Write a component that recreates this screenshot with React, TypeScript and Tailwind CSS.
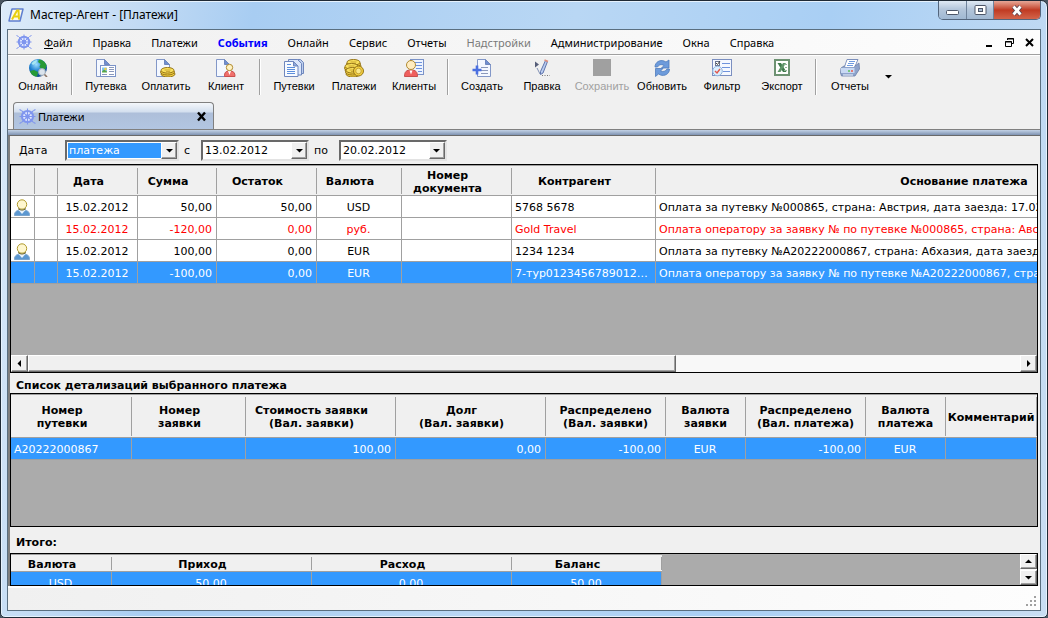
import type { ReactNode } from "react";

type Row = { client: boolean; tone: "black" | "red" | "selected"; cells: string[] };

const MENU = [
  "Правка",
  "Платежи",
  "События",
  "Онлайн",
  "Сервис",
  "Отчеты",
  "Надстройки",
  "Администрирование",
  "Окна",
  "Справка",
];

const PAYMENTS: Row[] = [
  {
    client: true,
    tone: "black",
    cells: ["15.02.2012", "50,00", "50,00", "USD", "", "5768 5678", "Оплата за путевку №000865, страна: Австрия, дата заезда: 17.02.2012"],
  },
  {
    client: false,
    tone: "red",
    cells: ["15.02.2012", "-120,00", "0,00", "руб.", "", "Gold Travel", "Оплата оператору за заявку № по путевке №000865, страна: Австрия"],
  },
  {
    client: true,
    tone: "black",
    cells: ["15.02.2012", "100,00", "0,00", "EUR", "", "1234 1234", "Оплата за путевку №A20222000867, страна: Абхазия, дата заезда: 17.02.2012"],
  },
  {
    client: false,
    tone: "selected",
    cells: ["15.02.2012", "-100,00", "0,00", "EUR", "", "7-тур0123456789012345", "Оплата оператору за заявку № по путевке №A20222000867, страна: Абхазия"],
  },
];

const TONES = {
  black: "bg-white text-black",
  red: "bg-white text-[#ff0000]",
  selected: "bg-[#3399ff] text-white",
};

const PAYMENT_ALIGN = ["text-center", "text-right", "text-right", "text-center", "text-left", "text-left", "text-left"];

/* ---------- icons ---------- */

function Wheel({ className }: { className: string }) {
  return (
    <svg viewBox="0 0 16 16" className={className} fill="none" stroke="#7f95ee">
      <circle cx="8" cy="8" r="5.2" strokeWidth="2" fill="#dfe6ff" />
      <circle cx="8" cy="8" r="1.6" strokeWidth="1.2" />
      <path d="M8 0.5v15M0.5 8h15M2.7 2.7l10.6 10.6M13.3 2.7L2.7 13.3M.5 1.5l2 1M15.500 1.500l-2 1M.5 14.500l2-1M15.500 14.500l-2-1" />
    </svg>
  );
}

function Sheet({ x = 0 }: { x?: number }) {
  return (
    <g transform={`translate(${x} 0)`}>
      <path d="M.5.5h8l5 5v12H.5z" fill="#f4f8ff" stroke="#8297c8" />
      <path d="M8.500.5l5 5h-5z" fill="#6f8fd0" stroke="#6f87bd" />
    </g>
  );
}

function Coins({ x, y }: { x: number; y: number }) {
  return (
    <g transform={`translate(${x} ${y})`} fill="#f3cf3f" stroke="#96761a">
      <ellipse cx="8" cy="7" rx="7" ry="3" />
      <ellipse cx="7.500" cy="5" rx="7" ry="3" />
      <ellipse cx="7.500" cy="3.300" rx="6.500" ry="2.800" fill="#f9e05c" />
      <path d="M4.500 3h6M6 4.500h4" stroke="#c09a2a" strokeWidth=".8" />
    </g>
  );
}

const ICONS: Record<string, ReactNode> = {
  globe: (
    <>
      <defs>
        <radialGradient id="globe" cx=".4" cy=".3" r=".75">
          <stop offset="0" stopColor="#9fe0ff" />
          <stop offset=".5" stopColor="#1e7fd0" />
          <stop offset="1" stopColor="#0a3c80" />
        </radialGradient>
      </defs>
      <circle cx="10" cy="9" r="9" fill="url(#globe)" />
      <path d="M11 .5c3 0 6 2 7.500 5.500l-1 4-3 1-3-3 1-3-2.500-2zM2 12l4-1 4 2-1 4.500C5 17.500 3 15 2 12z" fill="#279a35" />
      <path d="M3.500 4.500C5 2 7.500 1 9.500 1L8 4 5 6z" fill="#a6e6f2" />
      <circle cx="14" cy="13" r="3.400" fill="#dbe4ec" stroke="#a3afba" />
      <path d="M16.500 15.500l2.500 2.500" stroke="#8b7565" strokeWidth="1.600" />
    </>
  ),
  voucher: (
    <>
      <Sheet />
      <rect x="4.500" y="6.500" width="15" height="11" fill="#fff" stroke="#7b93c8" />
      <path d="M6 8.500h5v4H6z" fill="#7fc4f2" />
      <path d="M6 12.500l2-2 3 2v1H6z" fill="#58a548" />
      <circle cx="9.500" cy="10" r="1.200" fill="#f3cf3a" />
      <path d="M13 8.500h5M13 10.500h5M13 12.500h5M6 15.500h5M13 15.500h5" stroke="#8a98bb" />
    </>
  ),
  pay: (
    <>
      <Sheet />
      <Coins x={4} y={8} />
    </>
  ),
  client: (
    <>
      <Sheet />
      <path d="M8.500 17.500c0-4 1-5.500 5-5.500s5.500 1.500 5.500 5.500z" fill="#f0706c" stroke="#c9504e" />
      <path d="M12 12l1.500 4L15 12z" fill="#fff" />
      <circle cx="13.500" cy="8.500" r="3.200" fill="#fff3c4" stroke="#b08a30" />
    </>
  ),
  vouchers: (
    <>
      <path d="M7.500.5h9l3 3v11h-12z" fill="#bccdec" stroke="#6f87bd" />
      <path d="M4.500.5h9l4 4v11.500h-13z" fill="#dbe6fa" stroke="#6f87bd" />
      <path d="M.5 2.500h9l4.500 4.500v10.500H.5z" fill="#f8fbff" stroke="#6f87bd" />
      <path d="M9.500 2.500l4.500 4.500H9.500z" fill="#8ea9dc" stroke="#6f87bd" />
      <path d="M3 5.500h4M3 8.500h8M3 10.500h8M3 12.500h8M3 14.500h8" stroke="#5d8fdc" />
    </>
  ),
  payments: (
    <>
      <Coins x={2} y={0} />
      <Coins x={0} y={4} />
      <Coins x={1} y={8} />
      <circle cx="14.500" cy="12" r="5" fill="#f3cf3f" stroke="#96761a" />
      <circle cx="14.500" cy="12" r="2.800" fill="#fbe98a" stroke="#b8952c" strokeWidth=".8" />
    </>
  ),
  clients: (
    <>
      <rect x="6.500" y=".5" width="13" height="15" fill="#eef4ff" stroke="#7b93c8" />
      <path d="M11 3.500h7M12 6.500h6M12 9.500h6M14 12.500h4" stroke="#6f93dc" />
      <path d="M.5 17.500c0-5 2-6.500 6.500-6.500s6.500 1.500 6.500 6.500z" fill="#ef5f5e" stroke="#c9504e" />
      <path d="M5.500 11.500l1.500 4 1.500-4z" fill="#fff" />
      <circle cx="7" cy="6" r="4.500" fill="#ffecc0" stroke="#b08a30" />
    </>
  ),
  create: (
    <>
      <Sheet x={5} />
      <path d="M9 8.500h7M9 11.500h7M9 14.500h7" stroke="#8a98bb" />
      <path d="M5 6.500v9M.5 11h9" stroke="#4a6fe0" strokeWidth="2.600" />
    </>
  ),
  edit: (
    <>
      <path d="M3 2.500l4 3-4 3z" fill="#555d78" />
      <path d="M13.500 1.500l-5 11 0 3 2.500-1.500 4.500-11.500z" fill="#b9cbee" stroke="#5e74ad" />
      <path d="M12.500 1l3.500 1.500" stroke="#e08f7e" strokeWidth="1.500" />
      <path d="M5 9l3 6" stroke="#8190b5" />
      <path d="M10 16.500h8" stroke="#777" strokeDasharray="1 1.500" />
    </>
  ),
  save: <rect x="1" y="0" width="18" height="17" fill="#a0a0a0" />,
  refresh: (
    <>
      <path d="M3 8C3 3 8 .5 12 2l2 1 3-2v8H9.500L12 6.500C9.500 5 7 5.500 5.500 8z" fill="#6d9bdb" stroke="#4f7cbd" strokeWidth=".8" />
      <path d="M17.500 10c0 5-5 7.500-9 6l-2-1-3 2.500V9.500H11L8.500 12c2.500 1 5 .5 6.500-2z" fill="#6d9bdb" stroke="#4f7cbd" strokeWidth=".8" />
    </>
  ),
  filter: (
    <>
      <rect x=".5" y=".5" width="19" height="16" fill="#f5f8ff" stroke="#7b8fc0" />
      <rect x="3.500" y="2.500" width="4" height="4" fill="#fff" stroke="#6b7690" />
      <path d="M4 4l1.500 1.500L8 2" fill="none" stroke="#444" />
      <path d="M10 4.500h8M10 8.500h8M11 12.500h7" stroke="#6f93dc" />
      <circle cx="5.500" cy="12" r="4.800" fill="#dcefff" stroke="#8fb2dc" />
      <path d="M3 12l2 2 3-4" fill="none" stroke="#e2574c" strokeWidth="1.400" />
    </>
  ),
  excel: (
    <>
      <rect x="3" y="1" width="14" height="15" fill="#fff" stroke="#6d9272" strokeWidth="2" />
      <path d="M5.500 4H9l5.500 9H11z" fill="#3f7a4c" />
      <path d="M14 4h-3l-5.500 9h3z" fill="#5f9469" />
      <path d="M12 5.500h3M13 8.500h2M12 11.500h3" stroke="#8fb296" />
    </>
  ),
  printer: (
    <>
      <path d="M7 .5h11l-4 9H4z" fill="#fff" stroke="#7d90bb" />
      <path d="M9 2.500h6M8 4.500h6M7 6.500h6" stroke="#6f9be0" />
      <path d="M1 9l3-2h11l4-3 .5 6-4.500 7H1.500L.5 14z" fill="#8ea3cb" stroke="#6c80aa" strokeWidth=".8" />
      <path d="M1 9h13.500v5H1z" fill="#c8d9f3" />
      <path d="M7 3h9l-2 5H5z" fill="#fff" />
      <path d="M8 4.500h6M7 6.500h6" stroke="#6f9be0" />
      <path d="M8 12h2" stroke="#5cc057" strokeWidth="1.500" />
      <path d="M11 12h2" stroke="#ee5a4a" strokeWidth="1.500" />
      <path d="M3 16h10" stroke="#eef4ff" />
    </>
  ),
};

function Person() {
  return (
    <svg viewBox="0 0 16 17" className="mx-auto block h-[17px] w-[16px]">
      <path d="M.5 16.500c0-4 2-5.500 7.500-5.500s7.500 1.500 7.500 5.500z" fill="#5b97d0" stroke="#7aa5cf" />
      <path d="M4.500 11l3.500 4 3.500-4z" fill="#e9f3fc" />
      <path d="M4 9.500c2 2 6 2 8 0" fill="none" stroke="#5a5320" />
      <circle cx="8" cy="5.500" r="4.700" fill="#fff7cf" stroke="#b09a2c" />
    </svg>
  );
}

function Arrow({ dir }: { dir: "up" | "down" | "left" | "right" }) {
  const paths = {
    up: "M1 6h7L4.500 2.500z",
    down: "M1 3h7L4.500 6.500z",
    left: "M6 1v7L2.500 4.500z",
    right: "M3 1v7l3.500-3.500z",
  };
  return (
    <svg viewBox="0 0 9 9" className="size-[9px]">
      <path d={paths[dir]} fill="#000" />
    </svg>
  );
}

/* ---------- controls ---------- */

const RAISED =
  "flex items-center justify-center border border-t-white border-l-white border-r-[#696969] border-b-[#696969] bg-[#f0f0f0] shadow-[inset_-1px_-1px_#a0a0a0]";

const SUNKEN =
  "flex border-2 border-t-[#696969] border-l-[#696969] border-r-[#e3e3e3] border-b-[#e3e3e3] bg-white";

function ToolButton({ icon, label, disabled }: { icon: string; label: string; disabled?: boolean }) {
  return (
    <button
      type="button"
      disabled={disabled}
      className="flex w-[60px] flex-col items-center font-['Liberation_Sans',sans-serif] text-[11px] leading-[14px] text-black disabled:text-[#a0a0a0]"
    >
      <svg viewBox="0 0 20 18" className="mb-[2px] h-[18px] w-[20px]">
        {ICONS[icon]}
      </svg>
      {label}
    </button>
  );
}

function Separator() {
  return <div className="mx-[3px] h-[36px] w-[2px] border-l border-[#a0a0a0] bg-white" />;
}

function DateBox({ id, label, value }: { id: string; label: string; value: string }) {
  return (
    <>
      <label htmlFor={id} className="mr-[11px] ml-[5px]">
        {label}
      </label>
      <div className={SUNKEN}>
        <input id={id} type="text" defaultValue={value} className="h-[17px] w-[88px] pl-[2px] outline-none" />
        <button type="button" aria-label="Открыть календарь" className={`${RAISED} w-[16px]`}>
          <Arrow dir="down" />
        </button>
      </div>
    </>
  );
}

/* sortable headers keep room for the sort mark to the right of the text */
function HeadCell({
  children,
  size,
  sortable = true,
}: {
  children?: ReactNode;
  size: "payments" | "details" | "totals";
  sortable?: boolean;
}) {
  const heights = {
    payments: "h-[26px]",
    details: "h-[39px]",
    totals: "h-[13px]",
  };
  return (
    <th className="border-b border-[#a0a0a0] bg-[#f0f0f0] p-0 pt-[2px] pb-px align-top font-bold">
      <div
        className={`flex items-center justify-center border-r border-[#a0a0a0] pt-px leading-[13px] ${heights[size]} ${
          sortable ? "pr-[18px]" : ""
        }`}
      >
        {children}
      </div>
    </th>
  );
}

function Cell({ children, className = "text-left" }: { children?: ReactNode; className?: string }) {
  return (
    <td className={`h-[22px] truncate border-r border-b border-[#a0a0a0] pt-px pr-[4px] pb-0 pl-[3px] ${className}`}>
      {children}
    </td>
  );
}

/* ---------- sections ---------- */

function TitleBar() {
  return (
    <header className="flex h-[28px] shrink-0 items-start">
      <div className="flex flex-1 items-center pt-[6px] pl-px">
        <svg viewBox="0 0 16 14" className="h-[14px] w-[16px]">
          <path d="M4 1h11l-3 12H1z" fill="#fdfbe8" stroke="#5f7fd0" strokeWidth="1.500" strokeLinejoin="round" />
          <path d="M4 11.500l5-9h1.500l.5 9M6 8.500h5" fill="none" stroke="#e8cf10" strokeWidth="2" />
        </svg>
        <h1 className="ml-[6px] font-['Noto_Sans',sans-serif] text-[12px] leading-[16px] text-black">
          Мастер-Агент - [Платежи]
        </h1>
      </div>
      <div className="flex h-[19px] overflow-hidden rounded-b-[5px] border border-t-0 border-[#53657c]">
        <button
          type="button"
          aria-label="Свернуть"
          className="flex w-[28px] items-center justify-center border-r border-[#6f839c] bg-linear-to-b from-[#dfe9f4] via-[#b4c6db] via-45% to-[#a0b8d2]"
        >
          <svg viewBox="0 0 13 12" className="h-[12px] w-[13px]">
            <rect x=".5" y="6.500" width="12" height="4" rx="1" fill="#fff" stroke="#4d5668" />
          </svg>
        </button>
        <button
          type="button"
          aria-label="Развернуть"
          className="flex w-[27px] items-center justify-center border-r border-[#6f839c] bg-linear-to-b from-[#dfe9f4] via-[#b4c6db] via-45% to-[#a0b8d2]"
        >
          <svg viewBox="0 0 13 12" className="h-[12px] w-[13px]">
            <rect x="1" y="1.500" width="11" height="9" rx="1" fill="#fff" stroke="#4d5668" />
            <rect x="4.500" y="4.500" width="4" height="3" fill="#a9bcd3" stroke="#4d5668" />
          </svg>
        </button>
        <button
          type="button"
          aria-label="Закрыть"
          className="flex w-[46px] items-center justify-center bg-linear-to-b from-[#e6a797] via-[#c03a22] via-50% to-[#d3644a]"
        >
          <svg viewBox="0 0 12 11" className="h-[11px] w-[12px]">
            <path d="M2.500 1.500l7 8M9.500 1.500l-7 8" stroke="#5b4652" strokeWidth="4.400" />
            <path d="M2.500 1.500l7 8M9.500 1.500l-7 8" stroke="#fff" strokeWidth="2.800" />
          </svg>
        </button>
      </div>
    </header>
  );
}

function MenuBar() {
  return (
    <nav className="flex h-[25px] shrink-0 items-center border-b border-[#a0a0a0] bg-linear-to-r from-[#f0f0f0] to-[#fdfdfd] pr-[5px] pl-[8px] font-['Noto_Sans',sans-serif] text-[11px]">
      <Wheel className="size-[16px]" />
      <div className="ml-[12px] flex flex-1 gap-[20px]">
        <button type="button">
          <span className="underline">Ф</span>айл
        </button>
        {MENU.map((item) => (
          <button
            key={item}
            type="button"
            disabled={item === "Надстройки"}
            className={item === "События" ? "font-bold text-[#0000ff]" : "text-black disabled:text-[#7a7a7a]"}
          >
            {item}
          </button>
        ))}
      </div>
      <div className="flex gap-[9px]">
        <button type="button" aria-label="Свернуть документ">
          <svg viewBox="0 0 11 11" className="size-[11px]">
            <path d="M2 9h6" stroke="#000" strokeWidth="2" />
          </svg>
        </button>
        <button type="button" aria-label="Восстановить документ">
          <svg viewBox="0 0 11 11" className="size-[11px]" fill="none" stroke="#000">
            <path d="M3.500 3V1.500h6v5H8M3 2h7M1.500 4.500h6v5h-6zM1 5h7" />
          </svg>
        </button>
        <button type="button" aria-label="Закрыть документ">
          <svg viewBox="0 0 11 11" className="size-[11px]">
            <path d="M2 2l7 7M9 2l-7 7" stroke="#000" strokeWidth="2" />
          </svg>
        </button>
      </div>
    </nav>
  );
}

function ToolBar() {
  return (
    <div className="flex h-[47px] shrink-0 border-t border-white pt-[3px]">
      <ToolButton icon="globe" label="Онлайн" />
      <Separator />
      <ToolButton icon="voucher" label="Путевка" />
      <ToolButton icon="pay" label="Оплатить" />
      <ToolButton icon="client" label="Клиент" />
      <Separator />
      <ToolButton icon="vouchers" label="Путевки" />
      <ToolButton icon="payments" label="Платежи" />
      <ToolButton icon="clients" label="Клиенты" />
      <Separator />
      <ToolButton icon="create" label="Создать" />
      <ToolButton icon="edit" label="Правка" />
      <ToolButton icon="save" label="Сохранить" disabled />
      <ToolButton icon="refresh" label="Обновить" />
      <ToolButton icon="filter" label="Фильтр" />
      <ToolButton icon="excel" label="Экспорт" />
      <Separator />
      <ToolButton icon="printer" label="Отчеты" />
      <button type="button" aria-label="Другие отчеты" className="flex h-[34px] w-[16px] items-center justify-center">
        <Arrow dir="down" />
      </button>
    </div>
  );
}

function Tabs() {
  return (
    <div className="flex shrink-0 border-b border-[#808080] pl-[5px]">
      <div className="flex h-[27px] w-[201px] items-center rounded-t-[4px] border border-b-0 border-[#808080] bg-[linear-gradient(#f4f7fb,#d3dfee_9px,#aebfda_10px,#b2c6e2)] pr-[6px] pl-[5px] font-['Noto_Sans',sans-serif] text-[11px]">
        <Wheel className="size-[17px]" />
        <button type="button" className="ml-[2px] flex-1 text-left">
          Платежи
        </button>
        <button type="button" aria-label="Закрыть вкладку">
          <svg viewBox="0 0 11 11" className="size-[11px]">
            <path d="M2 1.500l7 8M9 1.500l-7 8" stroke="#000" strokeWidth="2.400" />
          </svg>
        </button>
      </div>
    </div>
  );
}

function Filters() {
  return (
    <form className="flex h-[28px] shrink-0 items-center pl-[9px]">
      <label htmlFor="kind" className="w-[46px]">
        Дата
      </label>
      <div className={`${SUNKEN} relative`}>
        <select
          id="kind"
          className="h-[17px] w-[110px] appearance-none border border-white bg-[#3399ff] pl-px leading-[15px] text-white outline-none"
        >
          <option>платежа</option>
        </select>
        <span className={`${RAISED} pointer-events-none absolute inset-y-0 right-0 w-[16px]`}>
          <Arrow dir="down" />
        </span>
      </div>
      <DateBox id="from" label="с" value="13.02.2012" />
      <DateBox id="to" label="по" value="20.02.2012" />
    </form>
  );
}

function PaymentsGrid() {
  return (
    <section className="flex min-h-[120px] flex-1 flex-col border border-black bg-[#ababab]">
      <div className="flex-1 overflow-hidden border-t border-[#a0a0a0]">
        <table className="w-[1280px] table-fixed border-separate border-spacing-0">
          <colgroup>
            <col className="w-[24px]" />
            <col className="w-[23px]" />
            <col className="w-[80px]" />
            <col className="w-[79px]" />
            <col className="w-[100px]" />
            <col className="w-[85px]" />
            <col className="w-[110px]" />
            <col className="w-[144px]" />
            <col />
          </colgroup>
          <thead>
            <tr>
              <HeadCell size="payments" />
              <HeadCell size="payments" />
              <HeadCell size="payments">Дата</HeadCell>
              <HeadCell size="payments">Сумма</HeadCell>
              <HeadCell size="payments">Остаток</HeadCell>
              <HeadCell size="payments">Валюта</HeadCell>
              <HeadCell size="payments">
                Номер
                <br />
                документа
              </HeadCell>
              <HeadCell size="payments">Контрагент</HeadCell>
              <HeadCell size="payments">Основание платежа</HeadCell>
            </tr>
          </thead>
          <tbody>
            {PAYMENTS.map((row, i) => (
              <tr key={i} className={TONES[row.tone]}>
                <Cell>{row.client && <Person />}</Cell>
                <Cell />
                {row.cells.map((text, j) => (
                  <Cell key={j} className={PAYMENT_ALIGN[j]}>
                    {text}
                  </Cell>
                ))}
              </tr>
            ))}
          </tbody>
        </table>
      </div>
      <div className="flex h-[17px] bg-[#f8f8f8]">
        <button type="button" aria-label="Прокрутить влево" className={`${RAISED} w-[17px]`}>
          <Arrow dir="left" />
        </button>
        <div className="flex-1">
          <div className={`${RAISED} h-full w-49/75`} />
        </div>
        <button type="button" aria-label="Прокрутить вправо" className={`${RAISED} w-[17px]`}>
          <Arrow dir="right" />
        </button>
      </div>
    </section>
  );
}

function DetailsGrid() {
  return (
    <section className="h-[134px] shrink-0 overflow-hidden border border-black bg-[#ababab]">
      <table className="w-full table-fixed border-separate border-spacing-0 border-t border-[#a0a0a0]">
        <colgroup>
          <col className="w-[121px]" />
          <col className="w-[114px]" />
          <col className="w-[150px]" />
          <col className="w-[150px]" />
          <col className="w-[120px]" />
          <col className="w-[80px]" />
          <col className="w-[120px]" />
          <col className="w-[80px]" />
          <col />
        </colgroup>
        <thead>
          <tr>
            <HeadCell size="details">
              Номер
              <br />
              путевки
            </HeadCell>
            <HeadCell size="details">
              Номер
              <br />
              заявки
            </HeadCell>
            <HeadCell size="details">
              Стоимость заявки
              <br />
              (Вал. заявки)
            </HeadCell>
            <HeadCell size="details">
              Долг
              <br />
              (Вал. заявки)
            </HeadCell>
            <HeadCell size="details" sortable={false}>
              Распределено
              <br />
              (Вал. заявки)
            </HeadCell>
            <HeadCell size="details" sortable={false}>
              Валюта
              <br />
              заявки
            </HeadCell>
            <HeadCell size="details" sortable={false}>
              Распределено
              <br />
              (Вал. платежа)
            </HeadCell>
            <HeadCell size="details" sortable={false}>
              Валюта
              <br />
              платежа
            </HeadCell>
            <HeadCell size="details" sortable={false}>
              Комментарий
            </HeadCell>
          </tr>
        </thead>
        <tbody>
          <tr className="bg-[#3399ff] text-white">
            <Cell>A20222000867</Cell>
            <Cell />
            <Cell className="text-right">100,00</Cell>
            <Cell className="text-right">0,00</Cell>
            <Cell className="text-right">-100,00</Cell>
            <Cell className="text-center">EUR</Cell>
            <Cell className="text-right">-100,00</Cell>
            <Cell className="text-center">EUR</Cell>
            <Cell />
          </tr>
        </tbody>
      </table>
    </section>
  );
}

function TotalsGrid() {
  return (
    <section className="flex h-[33px] shrink-0 items-start justify-between overflow-hidden border border-black bg-[#ababab]">
      <table className="w-[651px] table-fixed border-separate border-spacing-0 border-t border-[#a0a0a0]">
        <colgroup>
          <col className="w-[101px]" />
          <col className="w-[200px]" />
          <col className="w-[200px]" />
          <col className="w-[150px]" />
        </colgroup>
        <thead>
          <tr>
            <HeadCell size="totals">Валюта</HeadCell>
            <HeadCell size="totals">Приход</HeadCell>
            <HeadCell size="totals">Расход</HeadCell>
            <HeadCell size="totals">Баланс</HeadCell>
          </tr>
        </thead>
        <tbody>
          <tr className="bg-[#3399ff] text-white">
            <Cell className="text-center">USD</Cell>
            <Cell className="text-center">50.00</Cell>
            <Cell className="text-center">0.00</Cell>
            <Cell className="text-center">50.00</Cell>
          </tr>
        </tbody>
      </table>
      <div className="flex h-full w-[17px] flex-col gap-px bg-[#f8f8f8]">
        <button type="button" aria-label="Прокрутить вверх" className={`${RAISED} flex-1`}>
          <Arrow dir="up" />
        </button>
        <button type="button" aria-label="Прокрутить вниз" className={`${RAISED} flex-1`}>
          <Arrow dir="down" />
        </button>
      </div>
    </section>
  );
}

function StatusBar() {
  return (
    <footer className="flex h-[24px] shrink-0 items-end justify-end border-t-2 border-white bg-linear-to-r from-[#f0f0f0] to-[#fdfdfd] p-[3px]">
      <svg viewBox="0 0 11 11" className="size-[11px]" fill="#a0a0a0">
        <path d="M8 0h2v2H8zM4 4h2v2H4zM8 4h2v2H8zM0 8h2v2H0zM4 8h2v2H4zM8 8h2v2H8z" />
      </svg>
    </footer>
  );
}

export default function App() {
  return (
    <div className="h-screen bg-[#4a5560] text-[11px] leading-[13px] text-black">
      <div className="flex h-full flex-col rounded-t-[7px] rounded-b-[5px] border border-[#1f2a36] bg-[#b4d3f1] bg-[linear-gradient(100deg,#dcebf9,#c3dbf4_12%,#a8cdf2_22%,#b9d7f4_50%,#a9cff4_72%,#c9def3)] px-[6px] pb-[6px] font-['DejaVu_Sans',sans-serif] shadow-[inset_0_0_0_1px_#e6f2fd]">
        <TitleBar />
        <main className="flex min-h-0 flex-1 flex-col border border-[#5a6f80] bg-[#f0f0f0]">
          <MenuBar />
          <ToolBar />
          <Tabs />
          <div className="h-[5px] shrink-0 bg-linear-to-b from-[#c3d2e6] to-[#7f93b2]" />
          <div className="flex min-h-0 flex-1 flex-col border-t border-l-2 border-[#696969] border-l-[#808080] pr-[2px]">
            <Filters />
            <PaymentsGrid />
            <h2 className="shrink-0 pt-[6px] pb-px pl-[6px] font-bold">Список детализаций выбранного платежа</h2>
            <DetailsGrid />
            <h2 className="shrink-0 pt-[9px] pb-[4px] pl-[6px] font-bold">Итого:</h2>
            <TotalsGrid />
          </div>
          <StatusBar />
        </main>
      </div>
    </div>
  );
}
